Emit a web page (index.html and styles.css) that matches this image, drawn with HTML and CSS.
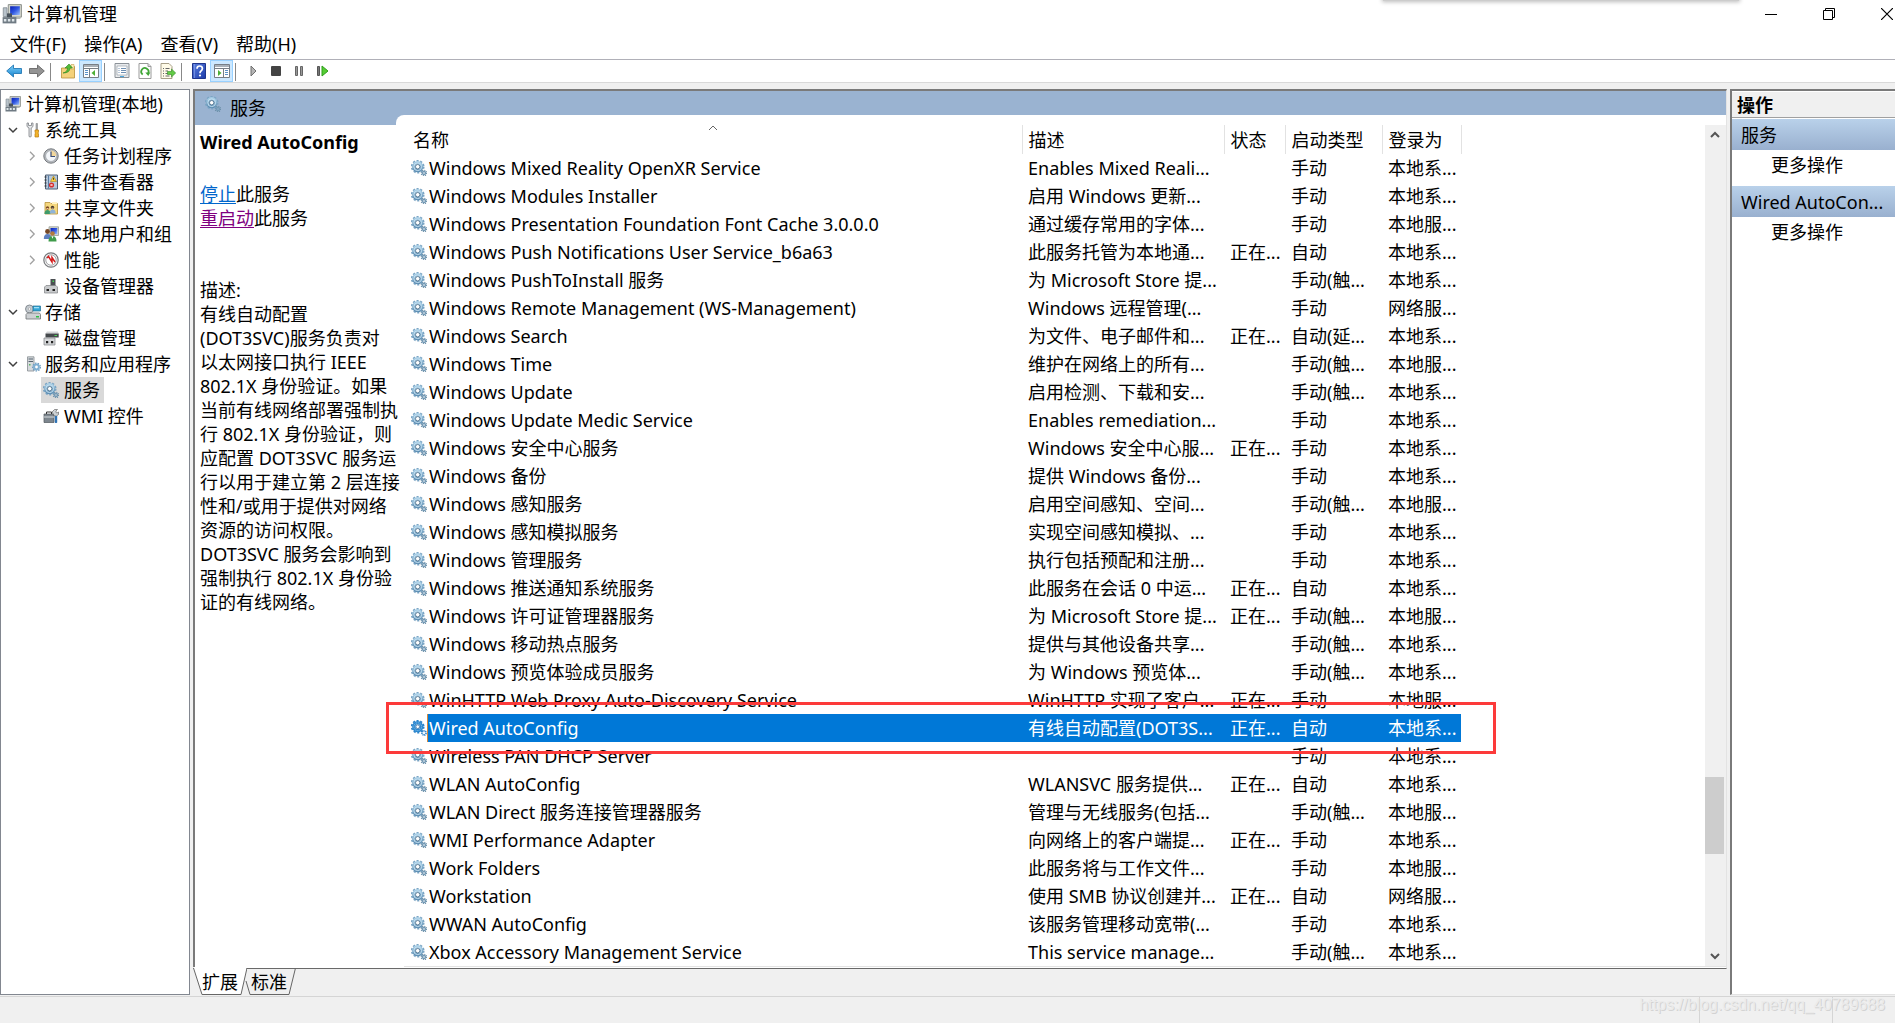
FILE: index.html
```html
<!DOCTYPE html>
<html lang="zh-CN">
<head>
<meta charset="utf-8">
<title>计算机管理</title>
<link rel="stylesheet" href="styles.css">
</head>
<body>
<svg class="defs" aria-hidden="true">
  <defs>
    <linearGradient id="g-blue" x1="0" y1="0" x2="1" y2="1"><stop offset="0" stop-color="#0a1fb4"/><stop offset=".5" stop-color="#2f55e0"/><stop offset="1" stop-color="#9fc4ff"/></linearGradient>
    <linearGradient id="g-gear" x1="0" y1="0" x2="0" y2="1"><stop offset="0" stop-color="#a3cbe4"/><stop offset="1" stop-color="#5f8fb4"/></linearGradient>
    <linearGradient id="g-arrow" x1="0" y1="0" x2="0" y2="1"><stop offset="0" stop-color="#7fd0f8"/><stop offset="1" stop-color="#1583d0"/></linearGradient>
    <linearGradient id="g-help" x1="0" y1="0" x2="1" y2="1"><stop offset="0" stop-color="#5a7fe0"/><stop offset="1" stop-color="#1c3aa8"/></linearGradient>
    <symbol id="computer" viewBox="0 0 16 16">
      <path d="M5 .5h10.500v10H5z" fill="#d5d8cf" stroke="#8b8f8a" stroke-width=".8"/>
      <path d="M6.500 1.800h7.800v7H6.500z" fill="url(#g-blue)"/>
      <path d="M8 10.500h6l1 1.500h-7z" fill="#b3b7b2"/>
      <path d="M1 3h3v7H1z" fill="#b9c3cb" stroke="#7c868e" stroke-width=".6"/>
      <path d="M.5 10.500h11V15.500H.5z" fill="#6f7a83"/><path d="M1.500 12h2v2h-2zm3.200 0h2v2h-2zm3.200 0h2v2h-2z" fill="#dfe6ea"/>
      <path d="M4 7.500h4v3H4z" fill="#49535c"/>
    </symbol>
    <symbol id="gear" viewBox="0 0 16 16">
      <circle cx="6.700" cy="6.700" r="6" fill="none" stroke="#7ba5c4" stroke-width="1.700" stroke-dasharray="2.100 1.670"/>
      <circle cx="6.700" cy="6.700" r="4" fill="none" stroke="url(#g-gear)" stroke-width="3.200"/>
      <circle cx="6.700" cy="6.700" r="3.900" fill="none" stroke="#c3dff0" stroke-width="1"/>
      <circle cx="6.700" cy="6.700" r="2.200" fill="#fff" stroke="#4f738f" stroke-width=".9"/>
      <circle cx="13" cy="13" r="2.700" fill="none" stroke="#6c8fa8" stroke-width="1.300" stroke-dasharray="1.060 1.060"/>
      <circle cx="13" cy="13" r="1.500" fill="none" stroke="#7399b5" stroke-width="1.400"/>
    </symbol>
    <symbol id="gear-on" viewBox="0 0 16 16">
      <circle cx="6.700" cy="6.700" r="6" fill="none" stroke="#2c83c9" stroke-width="1.700" stroke-dasharray="2.100 1.670"/>
      <circle cx="6.700" cy="6.700" r="4" fill="none" stroke="#2c88d0" stroke-width="3.200"/>
      <circle cx="6.700" cy="6.700" r="3.900" fill="none" stroke="#8fc8ee" stroke-width="1" stroke-dasharray="1 1"/>
      <circle cx="6.700" cy="6.700" r="1.900" fill="#fff" stroke="#1a5fa0" stroke-width=".8"/>
      <circle cx="13" cy="13" r="2" fill="none" stroke="#2c83c9" stroke-width="1.800" stroke-dasharray="1 .600"/>
    </symbol>
    <symbol id="tools" viewBox="0 0 16 16">
      <path d="M2 1v3.500l2 1.500v8.500q1 1 2.200 0V6L8 4.500V1L6.500 1v2.500h-3V1z" fill="#e4e6e8" stroke="#7d8286" stroke-width=".8"/>
      <path d="M11 1.500h1.500V8H11z" fill="#a9adb0" stroke="#777" stroke-width=".5"/>
      <path d="M10 8h3.500v2l-.5 1 .5 1v3H10v-3l.5-1-.5-1z" fill="#f3b42a" stroke="#b77a0e" stroke-width=".7"/>
    </symbol>
    <symbol id="clock" viewBox="0 0 16 16">
      <circle cx="8" cy="8" r="7.200" fill="#b9bcc0" stroke="#74787d"/><circle cx="8" cy="8" r="5.400" fill="#f4f7fb" stroke="#92979d" stroke-width=".6"/>
      <path d="M8 8V2.600A5.400 5.400 0 0 1 13.400 8z" fill="#f2d79c"/><path d="M8 3.500V8.500h4" fill="none" stroke="#3a4d78" stroke-width="1.200"/>
    </symbol>
    <symbol id="events" viewBox="0 0 16 16">
      <path d="M2.500 1h12v14h-12z" fill="#b6c8dc" stroke="#4d5f74"/><path d="M5.500 1.500V14.500" stroke="#5a7da4"/>
      <path d="M1.500 3h2M1.500 6h2M1.500 9h2M1.500 12h2" stroke="#333"/><path d="M10.500 2l3 5.500h-6z" fill="#fbd03b" stroke="#a97b00" stroke-width=".5"/><path d="M10.500 3.800v2" stroke="#333" stroke-width=".9"/>
      <circle cx="8.500" cy="11" r="2.600" fill="#d62f2f"/><path d="M7.500 10l2 2m0-2l-2 2" stroke="#fff" stroke-width=".8"/>
    </symbol>
    <symbol id="shared" viewBox="0 0 16 16">
      <path d="M2 2.500h5l1 1h6.500V14H2z" fill="#f5d77e" stroke="#b8923a" stroke-width=".8"/><path d="M9 2h5v2H9z" fill="#fff3c4"/>
      <circle cx="4.500" cy="8" r="1.700" fill="#7b4a24"/><circle cx="9.500" cy="7.500" r="1.700" fill="#3f3226"/>
      <path d="M1.500 14q0-4 3-4t3 4z" fill="#3f9b6a"/><path d="M6.700 13.500q0-4 3-4t3 4z" fill="#8fb4d8"/><path d="M3.500 8.500h2M8.500 8.200h2" stroke="#f2c79c"/>
    </symbol>
    <symbol id="users" viewBox="0 0 16 16">
      <path d="M6 .8h9.500v8.700H6z" fill="#d5d8cf" stroke="#8b8f8a" stroke-width=".7"/><path d="M7.500 2H14.300v6.200H7.500z" fill="url(#g-blue)"/>
      <circle cx="4.500" cy="5.500" r="2.400" fill="#754827"/><path d="M.8 13q0-5 3.700-5t3.700 5z" fill="#5c7fc0"/>
      <circle cx="9.500" cy="7.500" r="2.300" fill="#b27a3e"/><path d="M5.500 15.500q0-5.500 4-5.500t4 5.500z" fill="#3f9b4a"/><path d="M8.500 10.200l1 2.500 1-2.500z" fill="#fff"/>
    </symbol>
    <symbol id="perf" viewBox="0 0 16 16">
      <circle cx="8" cy="8" r="7.200" fill="#f2f2f2" stroke="#77797c" stroke-width="1.200"/><circle cx="8" cy="8" r="5.200" fill="#fff" stroke="#909295" stroke-width=".8"/>
      <path d="M4 6l1.500-1.500L9 10V5.500l3 4.500" fill="none" stroke="#d41a1a" stroke-width="1.500"/>
    </symbol>
    <symbol id="device" viewBox="0 0 16 16">
      <path d="M7.500 1h5v8h-5z" fill="#4b4f52"/><path d="M9.500 2.500h1.500v1.500H9.500z" fill="#49d455"/>
      <path d="M3 7.500h10L14.500 9v6h-13V9z" fill="#c8cacc" stroke="#7e8184" stroke-width=".7"/><path d="M3.500 11h2.500v2H3.500zm6 0h2.500v2H9.500z" fill="#222"/>
    </symbol>
    <symbol id="storage" viewBox="0 0 16 16">
      <circle cx="4.500" cy="5" r="4" fill="#c5cbd0" stroke="#747a80" stroke-width=".8"/><circle cx="4.500" cy="5" r="1.200" fill="#fff" stroke="#888" stroke-width=".5"/>
      <path d="M8 2h7.500v5H8z" fill="#35a6d6" stroke="#1f6f94" stroke-width=".7"/><path d="M9 3h5v1.300H9z" fill="#9fe0f7"/>
      <path d="M2.500 9h12l1 1.500v4.500H1V10.500z" fill="#cdd0d3" stroke="#6d7174" stroke-width=".8"/><path d="M11 12h3v1.500h-3z" fill="#2fbf45"/>
    </symbol>
    <symbol id="disk" viewBox="0 0 16 16">
      <path d="M4 1.500h11l.5 2H2.500z" fill="#d3d5d7"/><path d="M2.500 3.500h13.200v4H2.500z" fill="#45494c"/><path d="M11.500 5h2.500v1h-2.500z" fill="#49d455"/>
      <path d="M1 8h11v7H1z" fill="#d6d8da" stroke="#7e8184" stroke-width=".7"/><path d="M3 11h2.200v2.200H3zm5 0h2.200v2.200H8z" fill="#222"/>
    </symbol>
    <symbol id="server" viewBox="0 0 16 16">
      <path d="M2.500.8H9V15H2.500z" fill="#d6dadd" stroke="#858b90" stroke-width=".8"/><path d="M3.500 3h4.500M3.500 5.500h4.500" stroke="#55636e"/><path d="M4 8h1.500v1.500H4z" fill="#57b45f"/>
      <circle cx="11.500" cy="11" r="3.900" fill="none" stroke="#6f9cbf" stroke-width="1.300" stroke-dasharray="1.500 1.220"/><circle cx="11.500" cy="11" r="2.400" fill="#fff" stroke="#7fafd2" stroke-width="2"/>
    </symbol>
    <symbol id="wmi" viewBox="0 0 16 16">
      <path d="M1 6h10v8.500H1z" fill="#7d868e" stroke="#50575d" stroke-width=".7"/><path d="M1 9h10" stroke="#d8dde0"/><path d="M3.500 6V4h5v2" fill="none" stroke="#333"/>
      <path d="M9 4l2.500-2.500h3L13 3v1.500l1 .5 1.500-1v2.500L13.500 8h-2z" fill="#ced3d6" stroke="#555" stroke-width=".6"/><path d="M11.800 8h2.400v6.500q-1.200 1.200-2.400 0z" fill="#2f73b5"/>
    </symbol>
    <symbol id="back" viewBox="0 0 16 16"><path d="M.7 8L7.500 2v3.500h8v5h-8V14z" fill="url(#g-arrow)" stroke="#2378b4" stroke-width=".9"/></symbol>
    <symbol id="forward" viewBox="0 0 16 16"><path d="M15.300 8L8.500 2v3.500h-8v5h8V14z" fill="#949494" stroke="#666" stroke-width=".9"/></symbol>
    <symbol id="folder-up" viewBox="0 0 16 16">
      <path d="M1.500 5H8l1-1.500h5.500V15h-13z" fill="#f4d27c" stroke="#b9903a" stroke-width=".8"/><path d="M11 1.500h3V6h-3z" fill="#fff0b8" stroke="#b9903a" stroke-width=".5"/>
      <path d="M3 10q4.500-1 4.500-5H5l4-4 3.500 4h-2.500q0 5-7 5z" fill="#54bd3a" stroke="#2b8420" stroke-width=".6"/>
    </symbol>
    <symbol id="pane-left" viewBox="0 0 16 14">
      <path d="M.5.500h15v13H.5z" fill="#fff" stroke="#777e86"/><path d="M1 1h14v2H1z" fill="#a9b1b9"/><path d="M1 4.500h14" stroke="#777e86"/><path d="M6.500 5v8.500" stroke="#777e86"/><path d="M2 6.500h3M2 8.500h3M2 10.500h3" stroke="#5b92c8"/><path d="M12 6v6L8.500 9z" fill="#4daf36"/>
    </symbol>
    <symbol id="pane-right" viewBox="0 0 16 14">
      <path d="M.5.500h15v13H.5z" fill="#fff" stroke="#777e86"/><path d="M1 1h14v2H1z" fill="#a9b1b9"/><path d="M1 4.500h14" stroke="#777e86"/><path d="M9.500 5v8.500" stroke="#777e86"/><path d="M11 6.500h3M11 8.500h3M11 10.500h3" stroke="#5b92c8"/><path d="M4 6v6l3.500-3z" fill="#4daf36"/>
    </symbol>
    <symbol id="props" viewBox="0 0 16 16">
      <path d="M1 .5h14v14H1z" fill="#e8eaec" stroke="#8c9298"/><path d="M3 3h10v9H3z" fill="#fff" stroke="#9aa2aa" stroke-width=".7"/><path d="M4.500 5.500h1M7 5.500h5M4.500 7.500h1M7 7.500h5M4.500 9.500h1M7 9.500h5" stroke="#6f8fb2"/><path d="M6 13.500h4" stroke="#4aa5dc"/>
    </symbol>
    <symbol id="refresh" viewBox="0 0 16 16">
      <path d="M2 .5h9l3 3v12H2z" fill="#fff" stroke="#9a9a9a"/><path d="M11 .5v3h3" fill="#ddd" stroke="#9a9a9a"/><path d="M5.700 11.500A3.600 3.600 0 1 1 11 10.500" fill="none" stroke="#3fa535" stroke-width="1.800"/><path d="M8.300 9.500h5l-2 3.500z" fill="#3fa535"/>
    </symbol>
    <symbol id="export" viewBox="0 0 16 16">
      <path d="M1 .5h8l3 3v12H1z" fill="#fffbe8" stroke="#a79f88"/><path d="M3 5.500h1M5.500 5.500h4M3 8h1M5.500 8H8M3 10.500h1M5.500 10.500H8M3 13h1M5.500 13h4" stroke="#666"/><path d="M7.500 8.500h4V6l4.200 4-4.200 4v-2.500h-4z" fill="#63cb45" stroke="#34892a" stroke-width=".6"/>
    </symbol>
    <symbol id="help" viewBox="0 0 16 16">
      <path d="M1.500.5h13v15h-13z" fill="url(#g-help)" stroke="#1f358c"/><path d="M3.500 1v14" stroke="#8ea6ec" stroke-width=".6"/>
      <path d="M6 5.800Q6 3 8.700 3t2.700 2.600Q11.400 7.200 9.800 8.200 9 8.800 9 10.200" fill="none" stroke="#fff" stroke-width="1.700"/><circle cx="9" cy="12.500" r="1.100" fill="#fff"/>
    </symbol>
    <symbol id="play" viewBox="0 0 16 16"><path d="M6 3v10l5-5z" fill="#b5b5b5" stroke="#6f6f6f"/></symbol>
    <symbol id="stop" viewBox="0 0 16 16"><rect x="3" y="3" width="10" height="10" rx="1" fill="#444"/></symbol>
    <symbol id="pause" viewBox="0 0 16 16"><path d="M4.500 3.500h2v9h-2zM9.500 3.500h2v9h-2z" fill="#999" stroke="#666"/></symbol>
    <symbol id="restart" viewBox="0 0 16 16"><path d="M3.500 3.500h2v9h-2z" fill="#777" stroke="#555"/><path d="M8 3v10l6-5z" fill="#55cc33" stroke="#2f9e1c"/></symbol>
    <symbol id="chev-open" viewBox="0 0 10 10"><path d="M1 3l4 4 4-4" fill="none" stroke="#404040" stroke-width="1.500"/></symbol>
    <symbol id="chev-shut" viewBox="0 0 10 10"><path d="M3 .8L7.200 5 3 9.200" fill="none" stroke="#a0a0a0" stroke-width="1.300"/></symbol>
  </defs>
</svg>

<div class="behind-window"></div>
<header class="titlebar">
  <svg class="title-icon"><use href="#computer"/></svg>
  <h1>计算机管理</h1>
  <div class="window-buttons">
    <button aria-label="最小化"><svg viewBox="0 0 12 12"><path d="M0 6.500h12" stroke="#000"/></svg></button>
    <button aria-label="还原"><svg viewBox="0 0 12 12"><path d="M.5 2.500h9v9h-9zM2.500 2.500v-2h9v9h-2" fill="none" stroke="#000"/></svg></button>
    <button aria-label="关闭"><svg viewBox="0 0 12 12"><path d="M0 0l12 12M12 0L0 12" stroke="#000" stroke-width="1.200"/></svg></button>
  </div>
</header>
<nav class="menubar">
  <button>文件(F)</button><button>操作(A)</button><button>查看(V)</button><button>帮助(H)</button>
</nav>
<div class="toolbar">
  <button aria-label="后退"><svg><use href="#back"/></svg></button>
  <button aria-label="前进"><svg><use href="#forward"/></svg></button>
  <span class="sep"></span>
  <button aria-label="上移"><svg><use href="#folder-up"/></svg></button>
  <button aria-label="显示控制台树" class="on"><svg><use href="#pane-left"/></svg></button>
  <span class="sep"></span>
  <button aria-label="属性"><svg><use href="#props"/></svg></button>
  <button aria-label="刷新"><svg><use href="#refresh"/></svg></button>
  <button aria-label="导出列表"><svg><use href="#export"/></svg></button>
  <span class="sep"></span>
  <button aria-label="帮助"><svg><use href="#help"/></svg></button>
  <button aria-label="显示操作窗格" class="on"><svg><use href="#pane-right"/></svg></button>
  <span class="sep"></span>
  <button aria-label="启动服务"><svg><use href="#play"/></svg></button>
  <button aria-label="停止服务"><svg><use href="#stop"/></svg></button>
  <button aria-label="暂停服务"><svg><use href="#pause"/></svg></button>
  <button aria-label="重启动服务"><svg><use href="#restart"/></svg></button>
</div>

<main class="workspace">
  <nav class="tree">
    <ul>
      <li class="root"><svg class="ic"><use href="#computer"/></svg><span>计算机管理(本地)</span></li>
      <li class="l1"><svg class="chev"><use href="#chev-open"/></svg><svg class="ic"><use href="#tools"/></svg><span>系统工具</span></li>
      <li class="l2"><svg class="chev"><use href="#chev-shut"/></svg><svg class="ic"><use href="#clock"/></svg><span>任务计划程序</span></li>
      <li class="l2"><svg class="chev"><use href="#chev-shut"/></svg><svg class="ic"><use href="#events"/></svg><span>事件查看器</span></li>
      <li class="l2"><svg class="chev"><use href="#chev-shut"/></svg><svg class="ic"><use href="#shared"/></svg><span>共享文件夹</span></li>
      <li class="l2"><svg class="chev"><use href="#chev-shut"/></svg><svg class="ic"><use href="#users"/></svg><span>本地用户和组</span></li>
      <li class="l2"><svg class="chev"><use href="#chev-shut"/></svg><svg class="ic"><use href="#perf"/></svg><span>性能</span></li>
      <li class="l2 leaf"><svg class="ic"><use href="#device"/></svg><span>设备管理器</span></li>
      <li class="l1"><svg class="chev"><use href="#chev-open"/></svg><svg class="ic"><use href="#storage"/></svg><span>存储</span></li>
      <li class="l2 leaf"><svg class="ic"><use href="#disk"/></svg><span>磁盘管理</span></li>
      <li class="l1"><svg class="chev"><use href="#chev-open"/></svg><svg class="ic"><use href="#server"/></svg><span>服务和应用程序</span></li>
      <li class="l2 leaf"><div class="selected"><svg class="ic"><use href="#gear"/></svg><span>服务</span></div></li>
      <li class="l2 leaf"><svg class="ic"><use href="#wmi"/></svg><span>WMI 控件</span></li>
    </ul>
  </nav>

  <section class="center">
    <div class="view">
      <div class="info">
        <h2><svg class="ic"><use href="#gear"/></svg>服务</h2>
        <div class="details">
          <h3>Wired AutoConfig</h3>
          <p><a href="#stop-service">停止</a>此服务<br><a class="visited" href="#restart-service">重启动</a>此服务</p>
          <p>描述:<br>有线自动配置<br>(DOT3SVC)服务负责对<br>以太网接口执行 IEEE<br>802.1X 身份验证。如果<br>当前有线网络部署强制执<br>行 802.1X 身份验证，则<br>应配置 DOT3SVC 服务运<br>行以用于建立第 2 层连接<br>性和/或用于提供对网络<br>资源的访问权限。<br>DOT3SVC 服务会影响到<br>强制执行 802.1X 身份验<br>证的有线网络。</p>
        </div>
      </div>
      <div class="list">
        <div class="list-body">
          <table>
            <colgroup><col class="c-name"><col class="c-desc"><col class="c-state"><col class="c-start"><col class="c-logon"></colgroup>
            <thead><tr><th>名称<svg class="sort" viewBox="0 0 10 6"><path d="M1 5l4-4 4 4" fill="none" stroke="#666"/></svg></th><th>描述</th><th>状态</th><th>启动类型</th><th>登录为</th></tr></thead>
            <tbody>
              <tr><td><svg class="ic"><use href="#gear"/></svg><span>Windows Mixed Reality OpenXR Service</span></td><td>Enables Mixed Reali...</td><td></td><td>手动</td><td>本地系...</td></tr>
              <tr><td><svg class="ic"><use href="#gear"/></svg><span>Windows Modules Installer</span></td><td>启用 Windows 更新...</td><td></td><td>手动</td><td>本地系...</td></tr>
              <tr><td><svg class="ic"><use href="#gear"/></svg><span>Windows Presentation Foundation Font Cache 3.0.0.0</span></td><td>通过缓存常用的字体...</td><td></td><td>手动</td><td>本地服...</td></tr>
              <tr><td><svg class="ic"><use href="#gear"/></svg><span>Windows Push Notifications User Service_b6a63</span></td><td>此服务托管为本地通...</td><td>正在...</td><td>自动</td><td>本地系...</td></tr>
              <tr><td><svg class="ic"><use href="#gear"/></svg><span>Windows PushToInstall 服务</span></td><td>为 Microsoft Store 提...</td><td></td><td>手动(触...</td><td>本地系...</td></tr>
              <tr><td><svg class="ic"><use href="#gear"/></svg><span>Windows Remote Management (WS-Management)</span></td><td>Windows 远程管理(...</td><td></td><td>手动</td><td>网络服...</td></tr>
              <tr><td><svg class="ic"><use href="#gear"/></svg><span>Windows Search</span></td><td>为文件、电子邮件和...</td><td>正在...</td><td>自动(延...</td><td>本地系...</td></tr>
              <tr><td><svg class="ic"><use href="#gear"/></svg><span>Windows Time</span></td><td>维护在网络上的所有...</td><td></td><td>手动(触...</td><td>本地服...</td></tr>
              <tr><td><svg class="ic"><use href="#gear"/></svg><span>Windows Update</span></td><td>启用检测、下载和安...</td><td></td><td>手动(触...</td><td>本地系...</td></tr>
              <tr><td><svg class="ic"><use href="#gear"/></svg><span>Windows Update Medic Service</span></td><td>Enables remediation...</td><td></td><td>手动</td><td>本地系...</td></tr>
              <tr><td><svg class="ic"><use href="#gear"/></svg><span>Windows 安全中心服务</span></td><td>Windows 安全中心服...</td><td>正在...</td><td>手动</td><td>本地系...</td></tr>
              <tr><td><svg class="ic"><use href="#gear"/></svg><span>Windows 备份</span></td><td>提供 Windows 备份...</td><td></td><td>手动</td><td>本地系...</td></tr>
              <tr><td><svg class="ic"><use href="#gear"/></svg><span>Windows 感知服务</span></td><td>启用空间感知、空间...</td><td></td><td>手动(触...</td><td>本地服...</td></tr>
              <tr><td><svg class="ic"><use href="#gear"/></svg><span>Windows 感知模拟服务</span></td><td>实现空间感知模拟、...</td><td></td><td>手动</td><td>本地系...</td></tr>
              <tr><td><svg class="ic"><use href="#gear"/></svg><span>Windows 管理服务</span></td><td>执行包括预配和注册...</td><td></td><td>手动</td><td>本地系...</td></tr>
              <tr><td><svg class="ic"><use href="#gear"/></svg><span>Windows 推送通知系统服务</span></td><td>此服务在会话 0 中运...</td><td>正在...</td><td>自动</td><td>本地系...</td></tr>
              <tr><td><svg class="ic"><use href="#gear"/></svg><span>Windows 许可证管理器服务</span></td><td>为 Microsoft Store 提...</td><td>正在...</td><td>手动(触...</td><td>本地服...</td></tr>
              <tr><td><svg class="ic"><use href="#gear"/></svg><span>Windows 移动热点服务</span></td><td>提供与其他设备共享...</td><td></td><td>手动(触...</td><td>本地系...</td></tr>
              <tr><td><svg class="ic"><use href="#gear"/></svg><span>Windows 预览体验成员服务</span></td><td>为 Windows 预览体...</td><td></td><td>手动(触...</td><td>本地系...</td></tr>
              <tr><td><svg class="ic"><use href="#gear"/></svg><span>WinHTTP Web Proxy Auto-Discovery Service</span></td><td>WinHTTP 实现了客户...</td><td>正在...</td><td>手动</td><td>本地服...</td></tr>
              <tr class="selected-row"><td><svg class="ic"><use href="#gear-on"/></svg><span>Wired AutoConfig</span><i class="callout"></i></td><td>有线自动配置(DOT3S...</td><td>正在...</td><td>自动</td><td>本地系...</td></tr>
              <tr><td><svg class="ic"><use href="#gear"/></svg><span>Wireless PAN DHCP Server</span></td><td></td><td></td><td>手动</td><td>本地系...</td></tr>
              <tr><td><svg class="ic"><use href="#gear"/></svg><span>WLAN AutoConfig</span></td><td>WLANSVC 服务提供...</td><td>正在...</td><td>自动</td><td>本地系...</td></tr>
              <tr><td><svg class="ic"><use href="#gear"/></svg><span>WLAN Direct 服务连接管理器服务</span></td><td>管理与无线服务(包括...</td><td></td><td>手动(触...</td><td>本地服...</td></tr>
              <tr><td><svg class="ic"><use href="#gear"/></svg><span>WMI Performance Adapter</span></td><td>向网络上的客户端提...</td><td>正在...</td><td>手动</td><td>本地系...</td></tr>
              <tr><td><svg class="ic"><use href="#gear"/></svg><span>Work Folders</span></td><td>此服务将与工作文件...</td><td></td><td>手动</td><td>本地服...</td></tr>
              <tr><td><svg class="ic"><use href="#gear"/></svg><span>Workstation</span></td><td>使用 SMB 协议创建并...</td><td>正在...</td><td>自动</td><td>网络服...</td></tr>
              <tr><td><svg class="ic"><use href="#gear"/></svg><span>WWAN AutoConfig</span></td><td>该服务管理移动宽带(...</td><td></td><td>手动</td><td>本地系...</td></tr>
              <tr><td><svg class="ic"><use href="#gear"/></svg><span>Xbox Accessory Management Service</span></td><td>This service manage...</td><td></td><td>手动(触...</td><td>本地系...</td></tr>
            </tbody>
          </table>
          <div class="scrollbar">
            <button aria-label="向上滚动"><svg viewBox="0 0 10 8"><path d="M1 6l4-4 4 4" fill="none" stroke="#555" stroke-width="2"/></svg></button>
            <div class="track"><div class="thumb"></div></div>
            <button aria-label="向下滚动"><svg viewBox="0 0 10 8"><path d="M1 2l4 4 4-4" fill="none" stroke="#555" stroke-width="2"/></svg></button>
          </div>
        </div>
      </div>
    </div>
    <div class="tabs">
      <button class="tab active"><svg viewBox="0 0 54 28"><path d="M0 0h54L48 27H9z" fill="#fff"/><path d="M.5 1L9 27.500H48L54 1" fill="none" stroke="#666"/></svg><span>扩展</span></button>
      <button class="tab"><svg viewBox="0 0 54 28"><path d="M2 14l4 13.500h39L51.500 1" fill="none" stroke="#666"/></svg><span>标准</span></button>
    </div>
  </section>

  <aside class="actions">
    <h2>操作</h2>
    <h3>服务</h3>
    <button>更多操作</button>
    <h3>Wired AutoCon...</h3>
    <button>更多操作</button>
  </aside>
</main>
<footer class="statusbar">
  <div class="status-cell grow"></div><div class="status-cell middle"></div><div class="status-cell last"></div>
  <span class="watermark">https://blog.csdn.net/qq_40789688</span>
</footer>
</body>
</html>
```
FILE: styles.css
```css
* { box-sizing: border-box; }
body {
  margin: 0;
  min-height: 100vh;
  display: flex;
  flex-direction: column;
  background: #fff;
  color: #000;
  font: 18px/24px "Noto Sans", "Noto Sans CJK SC", sans-serif;
  white-space: nowrap;
  overflow-x: hidden;
}
button { border: 0; padding: 0; margin: 0; background: none; font: inherit; color: inherit; }
h1, h2, h3, p, ul { margin: 0; padding: 0; font: inherit; list-style: none; }
.defs { position: absolute; width: 0; height: 0; }
.ic { width: 16px; height: 16px; flex: none; }

.behind-window {
  position: absolute;
  top: -6px;
  right: 156px;
  width: 356px;
  height: 7px;
  background: #ccc;
  box-shadow: 0 0 4px 1px #bbb;
}
.titlebar { display: flex; align-items: center; height: 28px; padding-left: 2px; }
.title-icon { width: 20px; height: 20px; margin-right: 5px; }
.window-buttons { display: flex; gap: 46px; margin-left: auto; padding-right: 2px; }
.window-buttons button { display: flex; width: 12px; }
.window-buttons svg { width: 12px; height: 12px; }
.menubar { display: flex; align-items: center; gap: 18px; height: 32px; padding-left: 10px; border-bottom: 1px solid #b0b0b8; }
.toolbar { display: flex; height: 23px; padding-left: 2px; border-bottom: 1px solid #d9d9d9; }
.toolbar button { display: flex; align-items: center; justify-content: center; width: 23px; height: 22px; }
.toolbar button svg { width: 16px; height: 16px; }
.toolbar .on { background: #cce8ff; border: 1px solid #99d1ff; }
.sep { width: 8px; padding: 3px 2px; }
.sep::before { content: ""; display: block; width: 1px; height: 18px; background: #888; }

.workspace {
  flex: 1;
  display: grid;
  grid-template-columns: 190px minmax(0, 1fr) 165px;
  gap: 3px;
  padding: 6px 0 1px;
  background: #f0f0f0;
}
.tree { border: 1px solid #828790; background: #fff; padding-top: 1px; }
.tree li { display: flex; align-items: center; height: 26px; }
.tree .root { padding-left: 4px; }
.tree .root .ic { margin-right: 5px; }
.chev { width: 10px; height: 10px; margin-right: 7px; flex: none; }
.l1 { padding-left: 7px; }
.l1 .ic { margin-right: 4px; }
.l2 { padding-left: 26px; }
.l2 .chev { margin-right: 6px; }
.l2 .ic { margin-right: 5px; }
.l2.leaf { padding-left: 42px; }
.selected { display: flex; align-items: center; height: 26px; margin-left: -2px; padding: 0 4px 0 2px; background: #d9d9d9; }

.center { display: flex; flex-direction: column; min-width: 0; }
.view {
  flex: 1;
  display: grid;
  grid-template-columns: 201px minmax(0, 1fr);
  border: 2px solid #696969;
  border-width: 2px 1px 1px 2px;
  border-color: #7a7a7a #e3e3e3 #696969 #7a7a7a;
  background: #9ab3d1;
}
.info { display: flex; flex-direction: column; min-width: 0; position: relative; z-index: 1; }
.info h2 { display: flex; gap: 9px; height: 34px; padding: 5px 0 0 10px; }
.details { flex: 1; background: #fff; padding: 5px 0 0 5px; }
.details h3 { font-weight: 700; margin-bottom: 28px; }
.details p + p { margin-top: 48px; }
.details a { color: #0066cc; text-underline-offset: 2px; text-decoration-thickness: 1px; }
.details a.visited { color: #800080; }
.list { margin-top: 24px; padding: 10px 0 0 8px; background: #fff; border-top-left-radius: 8px; }
.list-body { display: flex; justify-content: space-between; border-bottom: 1px solid #e3e3e3; }
table { width: 1057px; border-collapse: collapse; table-layout: fixed; }
.c-name { width: 618px; }
.c-desc { width: 202px; }
.c-state { width: 61px; }
.c-start { width: 97px; }
.c-logon { width: 79px; }
th { position: relative; height: 29px; padding: 0 0 0 6px; text-align: left; font-weight: 400; border-right: 1px solid #e2e2e2; }
th:first-child { padding-left: 9px; }
.sort { position: absolute; top: 0; left: 50%; width: 10px; height: 6px; margin-left: -5px; }
td { height: 28px; padding: 0 0 0 6px; }
td:first-child { position: relative; display: flex; align-items: center; padding-left: 7px; }
td:first-child span { flex: 1; line-height: 28px; padding-left: 2px; }
.selected-row td, .selected-row span { color: #fff; }
.selected-row td:not(:first-child), .selected-row span { background: #0078d7; }
.selected-row span { box-shadow: inset 1px 0 #d98a3d; }
.selected-row .callout {
  position: absolute;
  top: -12px;
  left: -18px;
  width: 1110px;
  height: 52px;
  border: 3px solid #fc3a3a;
  z-index: 2;
}
.scrollbar { display: flex; flex-direction: column; width: 21px; background: #f0f0f0; }
.scrollbar button { height: 20px; padding-right: 2px; display: flex; align-items: center; justify-content: center; }
.scrollbar svg { width: 10px; height: 8px; }
.track { flex: 1; display: grid; grid-template-rows: 632fr 77fr 92fr; }
.thumb { grid-row: 2; margin-right: 2px; background: #cdcdcd; }

.tabs { display: flex; height: 26px; }
.tab { position: relative; width: 54px; height: 26px; }
.tab svg { position: absolute; left: 0; top: -2px; width: 54px; height: 28px; }
.tab span { position: relative; }
.tab.active { z-index: 1; }
.tab + .tab { margin-left: -3px; padding-right: 4px; }

.actions { border: solid #7a7a7a; border-width: 2px 0 0 2px; border-bottom: 1px solid #e3e3e3; background: #fff; }
.actions h2 { height: 27px; padding-left: 5px; background: #f0f0f0; border-bottom: 1px solid #a0a0a0; border-top: 1px solid #fff; font-weight: 700; line-height: 27px; }
.actions h3 { height: 31px; margin-top: 1px; padding-left: 9px; background: linear-gradient(#b9d1ea, #99b0cf); line-height: 32px; }
.actions button { display: block; height: 35px; padding: 0 0 5px 39px; line-height: 30px; }

.statusbar { position: relative; display: flex; height: 27px; border-top: 1px solid #d5d5d5; background: #f0f0f0; }
.status-cell { border-right: 1px solid #d5d5d5; }
.grow { flex: 1; }
.middle { width: 133px; }
.last { width: 62px; border: 0; }
.watermark { position: absolute; right: 10px; top: -4px; color: #ebebeb; font: 16px/24px "Liberation Sans", sans-serif; text-shadow: 1px 1px #d3d3d3; }
```
